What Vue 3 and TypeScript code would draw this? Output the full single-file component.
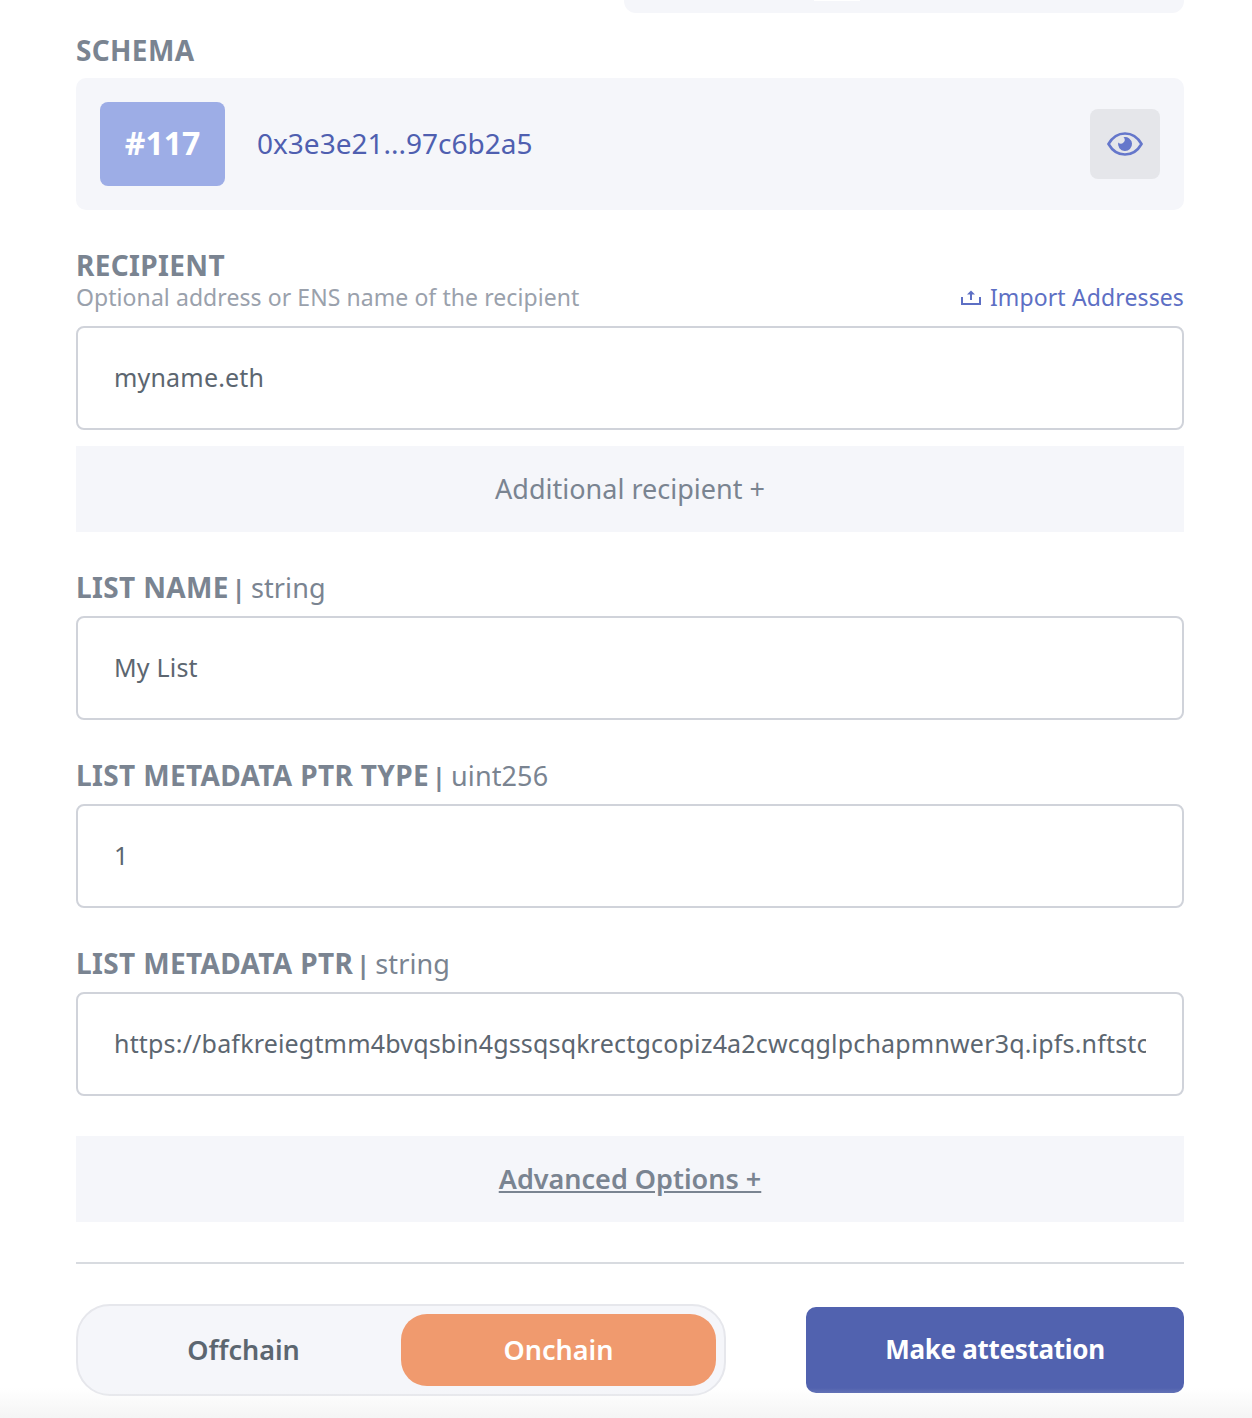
<template>
  <div class="page">
    <div class="top-tab"><span class="tab-mark"></span></div>

    <section class="schema-block">
      <h3 class="label">SCHEMA</h3>
      <div class="schema-card">
        <div class="schema-id">#117</div>
        <a class="schema-hash">0x3e3e21...97c6b2a5</a>
        <button class="eye-btn" aria-label="View schema">
          <svg width="36" height="26" viewBox="0 0 36 26" fill="none">
            <path d="M1.500 13C5.500 6 11 2.500 18 2.500S30.500 6 34.500 13C30.500 20 25 23.500 18 23.500S5.500 20 1.500 13Z" stroke="#6577cb" stroke-width="2.600" />
            <path d="M16.500 6.200A7 7 0 1 1 11.200 11.500 3.400 3.400 0 0 0 16.500 6.200Z" fill="#6577cb" />
          </svg>
        </button>
      </div>
    </section>

    <section class="recipient-block">
      <h3 class="label">RECIPIENT</h3>
      <div class="sub-row">
        <span class="sub">Optional address or ENS name of the recipient</span>
        <a class="import">
          <svg width="20" height="16" viewBox="0 0 20 16" fill="none" stroke="#5d6fc4" stroke-width="2">
            <path d="M1 8v7h18V8M10 11V3" />
            <path d="M6 5.500 10 1.500 14 5.500Z" fill="#5d6fc4" stroke="none" />
          </svg>
          Import Addresses
        </a>
      </div>
      <input class="field" readonly value="myname.eth" />
      <div class="band add-recipient">Additional recipient +</div>
    </section>

    <section v-for="f in fields" :key="f.name" class="data-block">
      <h3 class="label typed">
        <span>{{ f.name }}</span>
        <span class="pipe">|</span>
        <span class="type">{{ f.type }}</span>
      </h3>
      <input class="field" readonly :value="f.value" />
    </section>

    <div class="band advanced">Advanced Options +</div>
    <hr class="rule" />

    <div class="actions">
      <div class="toggle">
        <span class="opt">Offchain</span>
        <span class="opt on">Onchain</span>
      </div>
      <button class="submit">Make attestation</button>
    </div>
    <div class="fade"></div>
  </div>
</template>

<script setup lang="ts">
const fields = [
  { name: 'LIST NAME', type: 'string', value: 'My List' },
  { name: 'LIST METADATA PTR TYPE', type: 'uint256', value: '1' },
  {
    name: 'LIST METADATA PTR',
    type: 'string',
    value: 'https://bafkreiegtmm4bvqsbin4gssqsqkrectgcopiz4a2cwcqglpchapmnwer3q.ipfs.nftstorage.link',
  },
]
</script>

<style>
html, body { margin: 0; background: #fff; }
</style>

<style scoped>
.page {
  width: 1252px;
  height: 1418px;
  box-sizing: border-box;
  padding: 0 68px 0 76px;
  position: relative;
  overflow: hidden;
  font-family: "Noto Sans", "Liberation Sans", sans-serif;
  color: #5c6670;
}
.top-tab {
  width: 560px;
  height: 13px;
  margin-left: auto;
  background: #f5f6fa;
  border-radius: 0 0 12px 12px;
  position: relative;
}
.tab-mark {
  position: absolute;
  left: 190px;
  top: 0;
  width: 46px;
  height: 1px;
  background: #fff;
}
.label {
  margin: 0;
  font-size: 28px;
  line-height: 32px;
  font-weight: 700;
  letter-spacing: 0.35px;
  color: #7a8491;
}
.typed {
  display: flex;
  align-items: baseline;
  height: 32px;
  gap: 3px;
}
.pipe { font-size: 25px; }
.type {
  margin-left: 2px;
  font-weight: 400;
  font-size: 27px;
  letter-spacing: 0.1px;
}
.schema-block { margin-top: 21px; }
.schema-card {
  margin-top: 12px;
  height: 132px;
  box-sizing: border-box;
  padding: 24px;
  background: #f5f6fa;
  border-radius: 10px;
  display: flex;
  align-items: center;
}
.schema-id {
  width: 125px;
  height: 84px;
  box-sizing: border-box;
  padding-bottom: 3px;
  background: #9dade6;
  border-radius: 8px;
  color: #fff;
  font-size: 32px;
  font-weight: 700;
  display: flex;
  align-items: center;
  justify-content: center;
}
.schema-hash {
  margin-left: 32px;
  padding-bottom: 2px;
  font-size: 28px;
  color: #4f5fb0;
}
.eye-btn {
  margin-left: auto;
  width: 70px;
  height: 70px;
  border: 0;
  border-radius: 8px;
  background: #e5e6ea;
  display: flex;
  align-items: center;
  justify-content: center;
  padding: 0;
}
.recipient-block { margin-top: 39px; }
.sub-row {
  display: flex;
  justify-content: space-between;
  align-items: center;
  height: 34px;
  box-sizing: border-box;
  padding-bottom: 2px;
  margin-bottom: 11px;
}
.sub { font-size: 23px; letter-spacing: 0.07px; color: #9aa1ac; }
.import {
  font-size: 23px;
  letter-spacing: 0.12px;
  color: #5d6fc4;
  display: flex;
  align-items: center;
  gap: 9px;
}
.field {
  display: block;
  width: 100%;
  height: 104px;
  box-sizing: border-box;
  border: 2px solid #d0d3da;
  border-radius: 8px;
  padding: 0 36px 2px;
  font: 25px "Noto Sans", "Liberation Sans", sans-serif;
  letter-spacing: 0.18px;
  color: #5c6670;
  background: #fff;
  outline: none;
}
.band {
  height: 86px;
  box-sizing: border-box;
  padding-bottom: 2px;
  background: #f5f6fa;
  display: flex;
  align-items: center;
  justify-content: center;
  color: #7a8491;
  font-size: 27px;
}
.add-recipient { margin-top: 16px; }
.data-block { margin-top: 39px; }
.data-block .label { margin-bottom: 13px; }
.advanced {
  margin-top: 40px;
  font-weight: 600;
  text-decoration: underline;
}
.rule {
  margin: 40px 0 0;
  border: 0;
  border-top: 2px solid #d8dbe0;
}
.actions {
  margin-top: 40px;
  display: flex;
  justify-content: space-between;
  align-items: center;
}
.toggle {
  width: 650px;
  height: 92px;
  box-sizing: border-box;
  border: 2px solid #e6e7ec;
  border-radius: 34px;
  background: #f5f6fa;
  padding: 8px;
  display: flex;
}
.opt {
  flex: 1;
  display: flex;
  align-items: center;
  justify-content: center;
  padding-bottom: 2px;
  border-radius: 26px;
  font-size: 27px;
  font-weight: 600;
}
.opt.on { background: #f09a6e; color: #fff; }
.submit {
  width: 378px;
  height: 86px;
  border: 0;
  border-radius: 10px;
  padding: 0 0 2px;
  background: #5162af;
  color: #fff;
  font: 700 26px "Noto Sans", "Liberation Sans", sans-serif;
  letter-spacing: -0.3px;
}
.fade {
  position: absolute;
  left: 0;
  right: 0;
  bottom: 0;
  height: 30px;
  background: linear-gradient(rgba(245, 245, 245, 0), rgba(240, 240, 240, 0.7));
  pointer-events: none;
}
</style>
